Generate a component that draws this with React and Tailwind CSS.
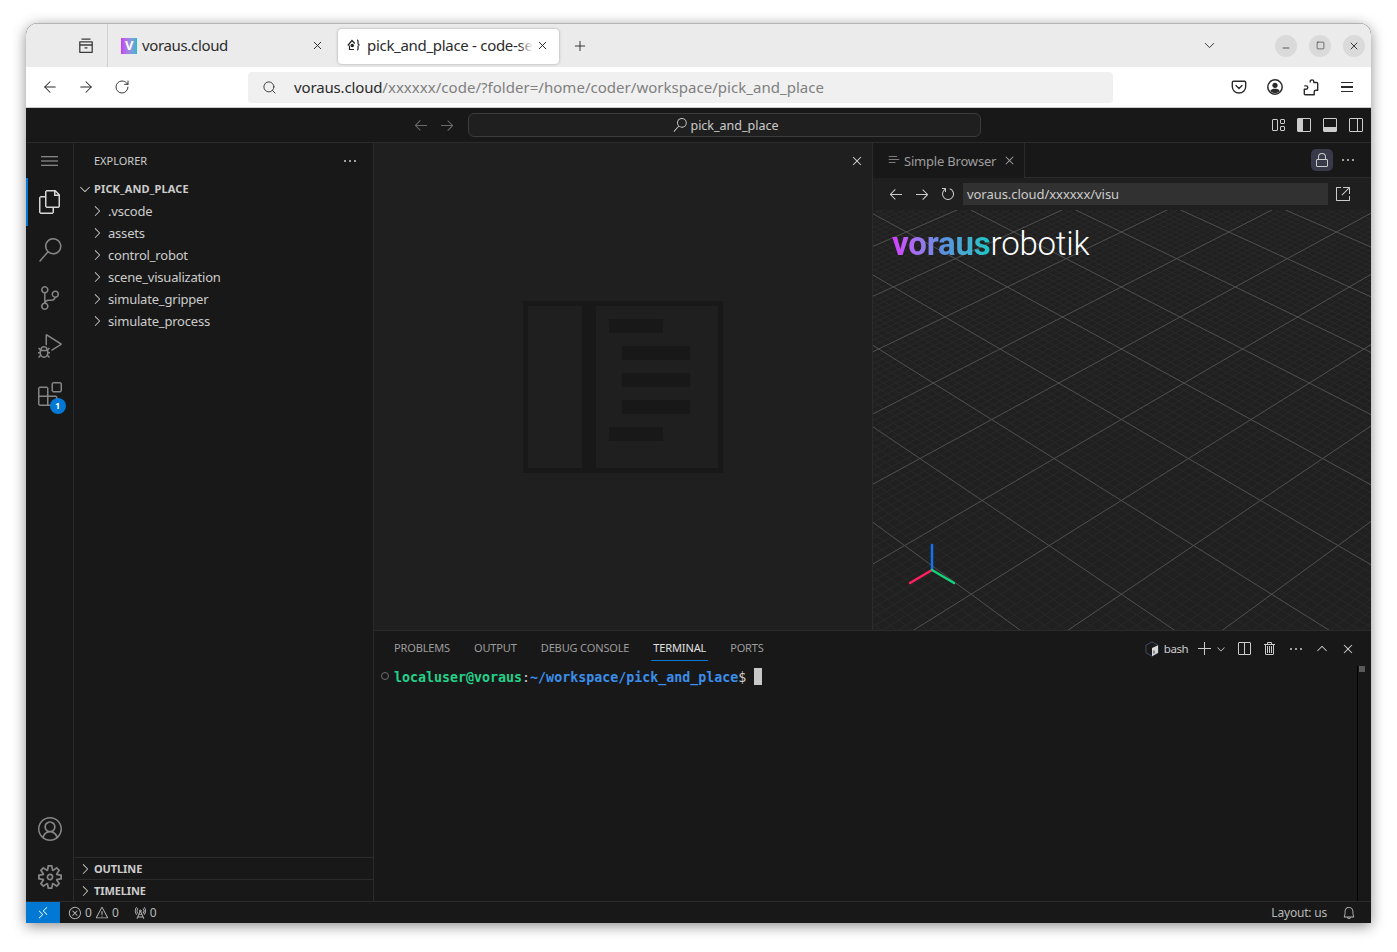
import {
  VscFiles, VscSearch, VscSourceControl, VscDebugAlt, VscExtensions, VscAccount, VscSettingsGear, VscMenu,
  VscEllipsis, VscChevronRight, VscChevronDown, VscChevronUp, VscClose, VscArrowLeft, VscArrowRight, VscRefresh,
  VscLinkExternal, VscLock, VscAdd, VscSplitHorizontal, VscTrash, VscRemote, VscError, VscWarning, VscRadioTower,
  VscBell, VscLayoutSidebarLeft, VscLayoutPanel, VscLayoutSidebarRightOff, VscLayout, VscListSelection,
} from 'react-icons/vsc';
import { ArrowLeft, ArrowRight, RotateCw, Search, Plus, X, ChevronDown, Minus, Square } from 'lucide-react';

const folders = ['.vscode', 'assets', 'control_robot', 'scene_visualization', 'simulate_gripper', 'simulate_process'];

// ground grid in perspective, fitted from the crossings in the picture
function gridPaths() {
  const pt = (n, j) => {
    const w = 1 / (3.659e-4 - 1.041e-5 * n);
    return `${((745 + w * 0.059 * j) / 3).toFixed(1)} ${((-2661 + w) / 3 - 2).toFixed(1)}`;
  };
  let fine = '';
  let main = '';
  for (let i = -100; i <= 100; i++) {
    const c = i * 0.2;
    const d = `M${pt(-4, -4 - c)}L${pt(14, 14 - c)}M${pt(-4, c + 4)}L${pt(14, c - 14)}`;
    if (i % 10 === 0) main += d;
    else fine += d;
  }
  return { fine, main };
}
const grid = gridPaths();

function GridCanvas() {
  return (
    <svg className="absolute inset-0" width="498" height="420" viewBox="0 0 498 420" fill="none">
      <path d={grid.fine} stroke="#292929" strokeWidth="1" />
      <path d={grid.main} stroke="#505050" strokeWidth="1" />
      <path d="M59 360V335" stroke="#1272f4" strokeWidth="2.5" strokeLinecap="round" />
      <path d="M59 360L37 373" stroke="#ff2060" strokeWidth="2.5" strokeLinecap="round" />
      <path d="M59 360L81 373" stroke="#12d27a" strokeWidth="2.5" strokeLinecap="round" />
    </svg>
  );
}

function Watermark() {
  return (
    <svg width="200" height="172" viewBox="0 0 200 172" fill="#181818">
      <path fillRule="evenodd" d="M0 0H200V172H0ZM5 5V167H59V5ZM73 5V167H195V5Z" />
      <rect x="86" y="18" width="54" height="14" />
      <rect x="99" y="45" width="68" height="14" />
      <rect x="99" y="72" width="68" height="14" />
      <rect x="99" y="99" width="68" height="14" />
      <rect x="86" y="126" width="54" height="14" />
    </svg>
  );
}

function FirefoxView() {
  return (
    <svg width="16" height="16" viewBox="0 0 16 16" fill="none" stroke="#3b3b3b" strokeWidth="1.3">
      <path d="M3.5 1.2H12.5" />
      <path d="M1.8 3.8H14.2V14.3H1.8Z" strokeLinejoin="round" />
      <path d="M1.8 7H14.2M6.5 9.8H9.5" />
    </svg>
  );
}

function CodeServerIcon() {
  return (
    <svg width="14" height="14" viewBox="0 0 14 14" fill="none" stroke="#222" strokeWidth="1.2">
      <path d="M.8 7.5L5 2.5L7.8 5.5M2.5 7.5V11.5H7" />
      <circle cx="5.3" cy="7.5" r="1.7" fill="#222" stroke="none" />
      <path d="M10 2C11.5 2 11 4 11 5.5S12.8 7 12.8 7S11 7 11 8.5S11.5 12 10 12" />
    </svg>
  );
}

function Pocket() {
  return (
    <svg width="16" height="16" viewBox="0 0 16 16" fill="none" stroke="#2b2b2b" strokeWidth="1.4" strokeLinecap="round" strokeLinejoin="round">
      <path d="M2.5 2.2H13.5C14.2 2.2 14.7 2.7 14.7 3.4V7.5C14.7 11.2 11.7 14 8 14S1.3 11.2 1.3 7.5V3.4C1.3 2.7 1.8 2.2 2.5 2.2Z" />
      <path d="M5 6.5L8 9.5L11 6.5" />
    </svg>
  );
}

function FxAccount() {
  return (
    <svg width="16" height="16" viewBox="0 0 16 16" fill="none">
      <circle cx="8" cy="8" r="7.2" stroke="#2b2b2b" strokeWidth="1.5" />
      <circle cx="8" cy="6.3" r="2.6" fill="#2b2b2b" />
      <path d="M3.3 12C4 10.3 5.5 9.7 8 9.7S12 10.3 12.7 12C11.5 13.4 9.8 14 8 14S4.5 13.4 3.3 12Z" fill="#2b2b2b" />
    </svg>
  );
}

function FxExtension() {
  return (
    <svg width="16" height="17" viewBox="0 0 16 17" fill="none" stroke="#2b2b2b" strokeWidth="1.4" strokeLinejoin="round">
      <path d="M7.2 3.5V2.6C7.2 1.6 8 .9 9 .9S10.8 1.6 10.8 2.6V3.5H13.8C14.3 3.5 14.7 3.9 14.7 4.4V11.2H12.9C11.9 11.2 11.2 11.9 11.2 12.8V15.8H2.2C1.7 15.8 1.3 15.4 1.3 14.9V10.3H3C4 10.3 4.8 9.6 4.8 8.6S4 6.9 3 6.9H1.3" />
    </svg>
  );
}

function BashIcon() {
  return (
    <svg width="14" height="16" viewBox="0 0 14 16" fill="none">
      <path d="M7 .8L13 4.2V11.8L7 15.2L1 11.8V4.2Z" stroke="#3a4a66" strokeWidth="1" />
      <path d="M7 7L13 4.2V11.8L7 15.2Z" fill="#d8d8d8" />
      <path d="M9 9.5V12.5" stroke="#333" strokeWidth="1" />
    </svg>
  );
}

function Fade() {
  return <span className="w-[14px] h-[20px] -ml-[14px] bg-linear-to-r from-transparent to-white" />;
}

function BrowserChrome() {
  return (
    <>
      <div className="h-[44px] flex items-center bg-[#ebebeb] border-t border-[#b4b4b4] text-[15px] text-[#2b2b2b] tracking-[-0.35px]">
        <div className="w-[82px] h-full flex items-center justify-end border-r border-[#cfcfcf]">
          <span className="mr-[13px]"><FirefoxView /></span>
        </div>
        <div className="w-[229px] flex items-center pl-[13px]">
          <span className="w-[16px] h-[16px] flex items-center justify-center bg-linear-to-r from-[#c83cf0] to-[#12b8d0] text-white text-[13px] font-bold">V</span>
          <span className="ml-[5px] w-[170px]">voraus.cloud</span>
          <X size={13} strokeWidth={1.8} className="ml-[-1px]" />
        </div>
        <div className="w-[221px] h-[35px] flex items-center pl-[9px] pb-[2px] ml-[1px] mt-[1px] bg-white rounded-[4px] shadow-[0_0_3px_rgba(0,0,0,0.3)]">
          <CodeServerIcon />
          <span className="ml-[6px] w-[166px] overflow-hidden whitespace-nowrap tracking-[-0.3px]">pick_and_place - code-server</span>
          <Fade />
          <X size={13} strokeWidth={1.8} className="ml-[3px]" />
        </div>
        <Plus size={16} strokeWidth={1.4} className="ml-[13px]" />
        <ChevronDown size={17} strokeWidth={1.3} className="ml-[613px]" />
        <div className="ml-[57px] w-[22px] h-[22px] rounded-full bg-[#dadada] flex items-center justify-center"><Minus size={10} strokeWidth={1.8} className="mt-[5px]" /></div>
        <div className="ml-[12px] w-[22px] h-[22px] rounded-full bg-[#dadada] flex items-center justify-center"><Square size={9} strokeWidth={1.6} /></div>
        <div className="ml-[12px] w-[22px] h-[22px] rounded-full bg-[#dadada] flex items-center justify-center"><X size={12} strokeWidth={1.8} /></div>
      </div>
      <div className="h-[41px] flex items-center bg-white border-b border-[#cccccc] text-[#2b2b2b]">
        <ArrowLeft size={18} strokeWidth={1.4} className="ml-[15px]" />
        <ArrowRight size={18} strokeWidth={1.4} className="ml-[18px]" />
        <RotateCw size={16} strokeWidth={1.4} className="ml-[19px]" />
        <div className="ml-[118px] w-[865px] h-[31px] rounded-[4px] bg-[#f0f0f0] flex items-center text-[15px] whitespace-nowrap">
          <Search size={15} strokeWidth={1.4} className="ml-[14px]" />
          <span className="ml-[17px] tracking-[-0.15px]">voraus.cloud</span>
          <span className="text-[#7f7f7f] tracking-[0.03px]">/xxxxxx/code/?folder=/home/coder/workspace/pick_and_place</span>
        </div>
        <div className="ml-[118px]"><Pocket /></div>
        <div className="ml-[20px]"><FxAccount /></div>
        <div className="ml-[20px]"><FxExtension /></div>
        <div className="ml-[22px] w-[12px] flex flex-col gap-[3px]">
          <span className="h-[1.5px] bg-[#2b2b2b]" />
          <span className="h-[1.5px] bg-[#2b2b2b]" />
          <span className="h-[1.5px] bg-[#2b2b2b]" />
        </div>
      </div>
    </>
  );
}

function TitleBar() {
  return (
    <div className="h-[35px] flex items-center bg-[#181818] border-b border-[#2b2b2b] text-[#cccccc]">
      <VscArrowLeft size={16} className="ml-[387px] text-[#6a6a6a]" />
      <VscArrowRight size={16} className="ml-[10px] text-[#6a6a6a]" />
      <div className="ml-[13px] w-[513px] h-[24px] flex items-center justify-center gap-[3px] rounded-[6px] border border-[#3c3c3c] bg-[#1f1f1f] text-[12.5px]">
        <VscSearch size={14} className="ml-[3px]" />
        <span className="pt-[3px]">pick_and_place</span>
      </div>
      <VscLayout size={16} className="ml-[289px]" />
      <VscLayoutSidebarLeft size={16} className="ml-[10px]" />
      <VscLayoutPanel size={16} className="ml-[10px]" />
      <VscLayoutSidebarRightOff size={16} className="ml-[10px]" />
    </div>
  );
}

function ActivityBar() {
  return (
    <div className="w-[48px] shrink-0 flex flex-col items-center border-r border-[#2b2b2b] text-[#868686]">
      <div className="h-[35px] w-full flex items-center justify-center"><VscMenu size={17} className="text-[#a8a8a8]" /></div>
      <div className="h-[48px] w-full flex items-center justify-center border-l-2 border-[#0078d4] pr-[2px] text-[#d7d7d7]"><VscFiles size={24} /></div>
      <div className="h-[48px] flex items-center"><VscSearch size={24} /></div>
      <div className="h-[48px] flex items-center"><VscSourceControl size={24} /></div>
      <div className="h-[48px] flex items-center"><VscDebugAlt size={24} /></div>
      <div className="h-[48px] flex items-center relative">
        <VscExtensions size={24} />
        <span className="absolute left-[12px] top-[28px] w-[16px] h-[16px] rounded-full bg-[#0078d4] text-white text-[9px] font-bold flex items-center justify-center">1</span>
      </div>
      <div className="mt-auto h-[48px] flex items-center"><VscAccount size={24} /></div>
      <div className="h-[48px] flex items-center"><VscSettingsGear size={24} /></div>
    </div>
  );
}

function CollapsedSection({ title }) {
  return (
    <div className="h-[22px] flex items-center border-t border-[#2b2b2b] pl-[3px] text-[11px] font-bold text-[#cccccc]">
      <VscChevronRight size={16} />
      <span className="ml-[1px] pt-[2px] tracking-[-0.1px]">{title}</span>
    </div>
  );
}

function Sidebar() {
  return (
    <div className="w-[300px] shrink-0 flex flex-col border-r border-[#2b2b2b] text-[#cccccc]">
      <div className="h-[35px] flex items-center justify-between pl-[20px] pr-[15px] text-[11px]">
        <span className="pt-[2px]">EXPLORER</span>
        <VscEllipsis size={16} />
      </div>
      <div className="h-[22px] flex items-center pl-[3px] text-[11px] font-bold">
        <VscChevronDown size={16} />
        <span className="ml-[1px] tracking-[0.15px]">PICK_AND_PLACE</span>
      </div>
      {folders.map(f => (
        <div key={f} className="h-[22px] flex items-center pl-[15px] text-[13px] tracking-[-0.2px]">
          <VscChevronRight size={16} />
          <span className="ml-[3px] pt-[2px]">{f}</span>
        </div>
      ))}
      <div className="mt-auto">
        <CollapsedSection title="OUTLINE" />
        <CollapsedSection title="TIMELINE" />
      </div>
    </div>
  );
}

function EditorArea() {
  return (
    <div className="w-[498px] shrink-0 flex flex-col bg-[#1f1f1f]">
      <div className="h-[35px] flex items-center justify-end pr-[7px] bg-[#1f1f1f] text-[#cccccc]"><VscClose size={16} /></div>
      <div className="flex-1 flex items-center justify-center pb-[34px]"><Watermark /></div>
    </div>
  );
}

function SimpleBrowser() {
  return (
    <div className="flex-1 flex flex-col border-l border-[#2b2b2b] bg-[#1f1f1f]">
      <div className="h-[35px] flex items-center bg-[#181818] border-b border-[#2b2b2b]">
        <div className="w-[152px] h-[35px] flex items-center pl-[15px] border-r border-[#2b2b2b] bg-[#181818] text-[13px] text-[#9d9d9d] tracking-[-0.2px]">
          <VscListSelection size={12} />
          <span className="ml-[4px] pt-[3px]">Simple Browser</span>
          <VscClose size={15} className="ml-[6px]" />
        </div>
        <div className="ml-auto w-[22px] h-[22px] rounded-[5px] bg-[#383a49] flex items-center justify-center text-[#cccccc]"><VscLock size={16} /></div>
        <VscEllipsis size={16} className="ml-[7px] mr-[15px] text-[#cccccc]" />
      </div>
      <div className="h-[32px] flex items-center text-[#cccccc]">
        <VscArrowLeft size={16} className="ml-[15px]" />
        <VscArrowRight size={16} className="ml-[10px]" />
        <VscRefresh size={16} className="ml-[10px]" />
        <div className="ml-[7px] w-[365px] h-[22px] flex items-center pl-[4px] pt-[2px] bg-[#313131] text-[13px] tracking-[-0.05px]">voraus.cloud/xxxxxx/visu</div>
        <VscLinkExternal size={16} className="ml-[7px]" />
      </div>
      <div className="flex-1 relative overflow-hidden bg-[#202020]">
        <GridCanvas />
        <div className="relative pl-[19px] pt-[12px] text-[33px] leading-[44px] font-['Roboto',sans-serif] tracking-[-0.2px]">
          <span className="font-bold bg-linear-to-r from-[#d438ff] via-[#5b8fe0] to-[#08c8c4] bg-clip-text text-transparent">voraus</span>
          <span className="font-light text-white">robotik</span>
        </div>
      </div>
    </div>
  );
}

function TerminalPanel() {
  return (
    <div className="h-[271px] flex flex-col border-t border-[#2b2b2b] bg-[#181818] text-[#cccccc]">
      <div className="h-[35px] flex items-center text-[11px] text-[#9d9d9d] tracking-[-0.14px]">
        <span className="ml-[20px]">PROBLEMS</span>
        <span className="ml-[24px]">OUTPUT</span>
        <span className="ml-[24px]">DEBUG CONSOLE</span>
        <span className="ml-[22px] h-[23px] mt-[1px] px-[2px] flex items-center border-b border-[#0078d4] text-[#e0e0e0]">TERMINAL</span>
        <span className="ml-[22px]">PORTS</span>
        <div className="ml-auto flex items-center text-[#cccccc]">
          <BashIcon />
          <span className="ml-[5px] text-[11.5px] tracking-[-0.5px]">bash</span>
          <VscAdd size={16} className="ml-[9px]" />
          <VscChevronDown size={12} className="ml-[2px]" />
          <VscSplitHorizontal size={16} className="ml-[9px]" />
          <VscTrash size={16} className="ml-[10px]" />
          <VscEllipsis size={16} className="ml-[10px]" />
          <VscChevronUp size={16} className="ml-[10px]" />
          <VscClose size={16} className="ml-[10px] mr-[15px]" />
        </div>
      </div>
      <div className="flex-1 flex">
        <div className="flex-1 flex items-start pl-[7px] pt-[3px] font-['DejaVu_Sans_Mono',monospace] text-[13.3px] leading-[18px] font-bold whitespace-pre">
          <span className="w-[8px] h-[8px] mt-[3px] mr-[5px] rounded-full border border-[#6e6e6e]" />
          <span className="text-[#23d18b]">localuser@voraus</span>
          <span className="font-normal text-[#cccccc]">:</span>
          <span className="text-[#3b8eea]">~/workspace/pick_and_place</span>
          <span className="font-normal text-[#cccccc]">$ </span>
          <span className="w-[8px] h-[17px] -mt-[1px] bg-[#c8c8c8]" />
        </div>
        <div className="w-[14px] border-l border-black">
          <div className="w-[6px] h-[6px] ml-[1px] bg-[#5a5a5a]" />
        </div>
      </div>
    </div>
  );
}

function StatusBar() {
  return (
    <div className="h-[22px] flex items-center border-t border-[#2b2b2b] bg-[#181818] text-[12px] text-[#b8b8b8]">
      <div className="w-[34px] h-full flex items-center justify-center bg-[#0078d4] text-white"><VscRemote size={14} /></div>
      <VscError size={14} className="ml-[8px]" />
      <span className="ml-[3px]">0</span>
      <VscWarning size={14} className="ml-[3px]" />
      <span className="ml-[3px]">0</span>
      <VscRadioTower size={14} className="ml-[14px]" />
      <span className="ml-[3px]">0</span>
      <span className="ml-auto tracking-[-0.2px]">Layout: us</span>
      <VscBell size={14} className="ml-[15px] mr-[15px]" />
    </div>
  );
}

export default function App() {
  return (
    <div className="w-[1397px] h-[952px] overflow-hidden bg-white pt-[23px] pl-[26px] font-['Noto_Sans',sans-serif]">
      <div className="w-[1345px] h-[900px] flex flex-col overflow-hidden rounded-t-[12px] bg-[#181818] shadow-[0_3px_14px_rgba(0,0,0,0.45)]">
        <BrowserChrome />
        <TitleBar />
        <div className="flex-1 min-h-0 flex">
          <ActivityBar />
          <Sidebar />
          <div className="flex-1 flex flex-col min-w-0">
            <div className="flex-1 min-h-0 flex">
              <EditorArea />
              <SimpleBrowser />
            </div>
            <TerminalPanel />
          </div>
        </div>
        <StatusBar />
      </div>
    </div>
  );
}
